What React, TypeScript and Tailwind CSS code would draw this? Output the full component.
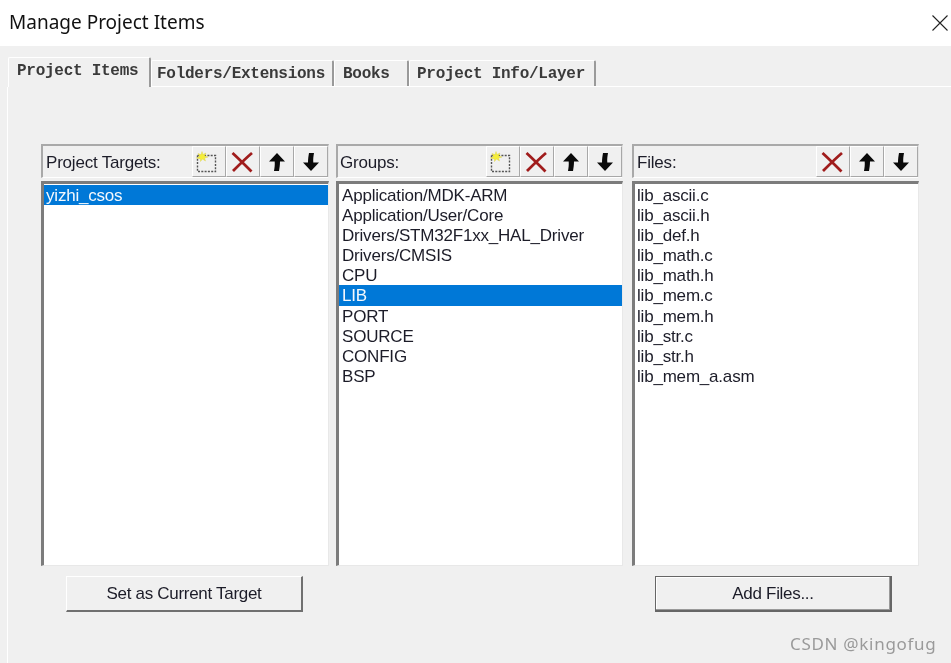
import type { ReactNode } from "react";

type Panel = {
    title: string;
    canAdd: boolean;
    items: string[];
    selected?: string;
    width: string;
    margin: string;
    itemPad: string;
    titlePad: string;
};

const panels: Panel[] = [
    { title: "Project Targets:", canAdd: true, items: ["yizhi_csos"], selected: "yizhi_csos", width: "w-[288px]", margin: "ml-[41px]", itemPad: "pl-[2px]", titlePad: "pl-[3px]" },
    {
        title: "Groups:",
        canAdd: true,
        items: ["Application/MDK-ARM", "Application/User/Core", "Drivers/STM32F1xx_HAL_Driver", "Drivers/CMSIS", "CPU", "LIB", "PORT", "SOURCE", "CONFIG", "BSP"],
        selected: "LIB",
        width: "w-[287px]",
        margin: "ml-[7px]",
        itemPad: "pl-[3px]",
        titlePad: "pl-[2px]",
    },
    {
        title: "Files:",
        canAdd: false,
        items: ["lib_ascii.c", "lib_ascii.h", "lib_def.h", "lib_math.c", "lib_math.h", "lib_mem.c", "lib_mem.h", "lib_str.c", "lib_str.h", "lib_mem_a.asm"],
        width: "w-[287px]",
        margin: "ml-[9px]",
        itemPad: "pl-[2px]",
        titlePad: "pl-[3px]",
    },
];

const tabs = [
    { label: "Project Items", w: "w-[143px]", pad: "pl-[8px]", active: true },
    { label: "Folders/Extensions", w: "w-[183px]", pad: "pl-[5px]", active: false },
    { label: "Books", w: "w-[75px]", pad: "pl-[8px]", active: false },
    { label: "Project Info/Layer", w: "w-[187px]", pad: "pl-[7px]", active: false },
];

function NewIcon() {
    return (
        <svg width="24" height="24" viewBox="0 0 24 24" className="mr-[5px]">
            <rect x="2.500" y="5.500" width="18" height="16" fill="none" stroke="#555" strokeWidth="1.4" strokeDasharray="2 1.3" />
            <path d="M7 1.500l1 3 3-1.500-1.500 3 3.500 1-3.500 1 1 3-3-2-2 2.500V9L1.500 8l3-1.500L3 3.500l3 1.200z" fill="#f5ee3a" stroke="#d8cf45" strokeWidth="0.4" />
        </svg>
    );
}

function DeleteIcon() {
    return (
        <svg width="24" height="24" viewBox="0 0 24 24" className="mr-[3px]">
            <path d="M2.500 3C8 8 16 16 21.500 21.500M22 3C16 8 8 16 3 21" fill="none" stroke="#a01c1c" strokeWidth="2.800" />
        </svg>
    );
}

function UpIcon() {
    return (
        <svg width="20" height="22" viewBox="0 0 20 22" className="mr-[1px]">
            <path d="M10 2L18 10.500H13C13 14 12.500 17 12 20H7C7.500 17 8 14 7.700 10.500H2z" fill="#0a0a0a" />
        </svg>
    );
}

function DownIcon() {
    return (
        <svg width="20" height="22" viewBox="0 0 20 22" className="mr-[1px]">
            <path d="M10 20L2 11.500H7C7 8 7.500 5 8 2h5C12.500 5 12 8 12.300 11.500H18z" fill="#0a0a0a" />
        </svg>
    );
}

function ToolButton({ children }: { children: ReactNode }) {
    return (
        <div className="w-[34px] h-[31px] flex items-center justify-center bg-[#f0f0f0] border-r border-b border-r-[#a8a8a8] border-b-[#a8a8a8] border-l border-t border-l-white border-t-white">
            {children}
        </div>
    );
}

function ListPanel({ panel }: { panel: Panel }) {
    return (
        <section className={`${panel.width} ${panel.margin} flex flex-col`}>
            <div className="h-[34px] flex items-center justify-between border-t-[2px] border-l-[2px] border-r border-b border-t-[#a9a9a9] border-l-[#a9a9a9] border-r-[#e4e4e4] border-b-white">
                <span className={`${panel.titlePad} pt-[2px] text-[17px] tracking-[-0.2px] text-[#1c1c28]`}>{panel.title}</span>
                <div className="flex self-end">
                    {panel.canAdd && <ToolButton><NewIcon /></ToolButton>}
                    <ToolButton><DeleteIcon /></ToolButton>
                    <ToolButton><UpIcon /></ToolButton>
                    <ToolButton><DownIcon /></ToolButton>
                </div>
            </div>
            <div className="mt-[3px] h-[385px] bg-white border-t-[3px] border-l-[3px] border-r border-b border-t-[#7c7c7c] border-l-[#7c7c7c] border-r-[#e8e8e8] border-b-[#e8e8e8] pt-[1px]">
                {panel.items.map((item) => (
                    <div
                        key={item}
                        className={`h-[20.1px] leading-[22px] text-[17px] tracking-[-0.2px] ${panel.itemPad} ${item === panel.selected ? "bg-[#0078d7] text-[#f4f8fc]" : "text-[#1c1c28]"}`}
                    >
                        {item}
                    </div>
                ))}
            </div>
        </section>
    );
}

export default function App() {
    return (
        <div className="relative w-[951px] h-[663px] overflow-hidden flex flex-col bg-[#f0f0f0] blur-[0.4px] font-['Liberation_Sans',Arial,sans-serif]">
            <header className="h-[46px] shrink-0 bg-white flex items-center justify-between">
                <h1 className="pl-[9px] pb-[2px] text-[19px] text-[#111] font-['Noto_Sans',sans-serif]">Manage Project Items</h1>
                <svg width="18" height="18" viewBox="0 0 18 18" className="mr-[2px]">
                    <path d="M1.500 1.500L16.500 16.500M16.500 1.500L1.500 16.500" stroke="#222" strokeWidth="1.100" fill="none" />
                </svg>
            </header>

            <nav className="ml-[8px] mt-[11px] h-[30px] flex items-end border-b border-b-white">
                {tabs.map((tab) => (
                    <div
                        key={tab.label}
                        className={`${tab.w} ${tab.pad} flex items-center rounded-t-[2px] border-t border-l border-t-white border-l-white border-r-[2px] border-r-[#9a9a9a] ${tab.active ? "h-[30px] -mb-px bg-[#f0f0f0] pb-[4px]" : "h-[26px]"}`}
                    >
                        <span className="font-['Liberation_Mono',monospace] font-bold text-[16px] tracking-[-0.27px] text-[#3a3a3a] whitespace-nowrap">{tab.label}</span>
                    </div>
                ))}
            </nav>

            <main className="flex-1 border-l border-l-white ml-[7px]">
                <div className="pt-[57px] -ml-[8px] flex">
                    {panels.map((panel) => (
                        <ListPanel key={panel.title} panel={panel} />
                    ))}
                </div>
                <div className="mt-[10px] -ml-[8px] flex">
                    <button className="ml-[66px] w-[237px] h-[36px] bg-[#f0f0f0] text-[17px] tracking-[-0.3px] text-[#1c1c28] border-t border-l border-t-white border-l-white border-r-[2px] border-b-[2px] border-r-[#707070] border-b-[#707070]">
                        Set as Current Target
                    </button>
                    <button className="ml-[352px] w-[237px] h-[36px] bg-[#f0f0f0] text-[17px] tracking-[-0.3px] text-[#1c1c28] border border-[#666] border-r-[2px] border-b-[2px] shadow-[inset_-1px_-1px_0_#9a9a9a,inset_1px_1px_0_#fff]">
                        Add Files...
                    </button>
                </div>
            </main>

            <span className="absolute left-[790px] top-[634px] text-[17px] tracking-[0.7px] text-[#9a9a9a] font-['Noto_Sans',sans-serif] leading-[20px]">CSDN @kingofug</span>
        </div>
    );
}
